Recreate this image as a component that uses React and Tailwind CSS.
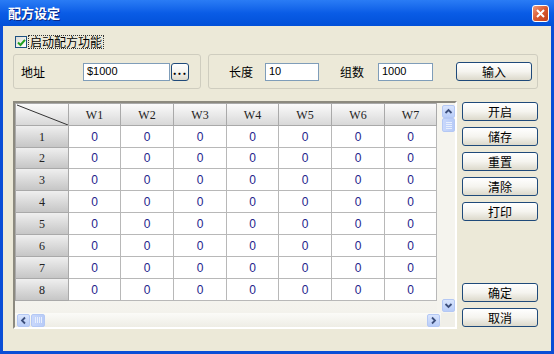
import React from "react";

const cols = [
  { w: "w-[53px]", label: "" },
  { w: "w-[52px]", label: "W1" },
  { w: "w-[53px]", label: "W2" },
  { w: "w-[53px]", label: "W3" },
  { w: "w-[52px]", label: "W4" },
  { w: "w-[53px]", label: "W5" },
  { w: "w-[53px]", label: "W6" },
  { w: "w-[52px]", label: "W7" },
];

const rows = [
  { n: 1, h: "h-[22px]" },
  { n: 2, h: "h-[21px]" },
  { n: 3, h: "h-[22px]" },
  { n: 4, h: "h-[22px]" },
  { n: 5, h: "h-[22px]" },
  { n: 6, h: "h-[22px]" },
  { n: 7, h: "h-[22px]" },
  { n: 8, h: "h-[22px]" },
];

const cjk = "font-['Noto_Sans_CJK_SC','Liberation_Sans',sans-serif]";

function XpButton({ children, className = "" }) {
  return (
    <button
      type="button"
      className={`flex items-center justify-center rounded-[3px] border border-[#1f4a7a] bg-linear-to-b from-white via-[#f5f4ef] to-[#dcd9cb] text-[12px] leading-none text-black ${cjk} ${className}`}
    >
      {children}
    </button>
  );
}

function Chevron({ dir }) {
  const d = {
    up: "M2.5 7 L5.5 4 L8.5 7",
    down: "M2.5 4 L5.5 7 L8.5 4",
    left: "M7 2.5 L4 5.5 L7 8.5",
    right: "M4 2.5 L7 5.5 L4 8.5",
  }[dir];
  return (
    <div className="flex h-[13px] w-[13px] items-center justify-center rounded-[2px] border border-[#b4c8f4] bg-linear-to-b from-[#d9e5fd] to-[#b9cdf8]">
      <svg width="11" height="11" viewBox="0 0 11 11">
        <path d={d} fill="none" stroke="#3c4f7c" strokeWidth="1.8" />
      </svg>
    </div>
  );
}

function Thumb({ vertical }) {
  return (
    <div
      className={`flex items-center justify-center gap-[1px] rounded-[2px] border border-[#b4c8f4] bg-linear-to-r from-[#c9d8fc] to-[#b7cbf7] ${
        vertical ? "h-[14px] w-[13px] flex-col" : "h-[13px] w-[14px]"
      }`}
    >
      {[0, 1, 2, 3].map((i) => (
        <div
          key={i}
          className={vertical ? "h-[1px] w-[6px] bg-[#e8effd]" : "h-[6px] w-[1px] bg-[#e8effd]"}
        />
      ))}
    </div>
  );
}

export default function App() {
  return (
    <div className="flex h-[354px] w-[554px] flex-col bg-[#0a4ed6]">
      {/* title bar */}
      <div className="flex h-[26px] items-center justify-between bg-linear-to-b from-[#2a7cf5] via-[#0a5ce6] to-[#0250d8] pl-[8px] pr-[5px]">
        <span className={`text-[13px] font-bold text-white [text-shadow:1px_1px_0_#0a2a8a] ${cjk}`}>
          配方设定
        </span>
        <div className="flex h-[17px] w-[17px] items-center justify-center rounded-[3px] border border-white bg-linear-to-br from-[#ef9a7a] via-[#d8582f] to-[#c2401a]">
          <svg width="11" height="11" viewBox="0 0 11 11">
            <path d="M2 2 L9 9 M9 2 L2 9" stroke="white" strokeWidth="2" />
          </svg>
        </div>
      </div>

      {/* body */}
      <div className="mx-[3px] mb-[3px] flex flex-1 flex-col bg-[#ece9d8] pl-[10px] pr-[13px] pt-[9px]">
        {/* checkbox */}
        <div className="flex h-[14px] items-center pl-[2px]">
          <div className="flex h-[12px] w-[12px] items-center justify-center border border-[#1c5180] bg-linear-to-br from-[#dcdcd6] to-white">
            <svg width="9" height="9" viewBox="0 0 9 9">
              <path d="M1 4.5 L3.5 7 L8 1.8" fill="none" stroke="#21a121" strokeWidth="2" />
            </svg>
          </div>
          <span
            className={`ml-[1px] border border-dotted border-[#333] px-[1px] text-[12px] leading-[12px] text-black ${cjk}`}
          >
            启动配方功能
          </span>
        </div>

        {/* group boxes */}
        <div className="mt-[5px] flex h-[35px] gap-[7px]">
          <div className="flex w-[188px] items-center rounded-[3px] border border-[#cfcdbf] pl-[7px]">
            <span className={`w-[62px] text-[12px] text-black ${cjk}`}>地址</span>
            <div className="flex h-[18px] w-[87px] items-center border border-[#7f9db9] bg-white pl-[3px] font-['Liberation_Sans',sans-serif] text-[11px] text-black">
              $1000
            </div>
            <XpButton className="ml-[1px] h-[18px] w-[18px] pb-[4px] font-bold tracking-[1px]">...</XpButton>
          </div>
          <div className="flex flex-1 items-center rounded-[3px] border border-[#cfcdbf] pl-[20px]">
            <span className={`w-[36px] text-[12px] text-black ${cjk}`}>长度</span>
            <div className="flex h-[18px] w-[54px] items-center border border-[#7f9db9] bg-white pl-[3px] font-['Liberation_Sans',sans-serif] text-[11px] text-black">
              10
            </div>
            <span className={`ml-[21px] w-[38px] text-[12px] text-black ${cjk}`}>组数</span>
            <div className="flex h-[18px] w-[55px] items-center border border-[#7f9db9] bg-white pl-[3px] font-['Liberation_Sans',sans-serif] text-[11px] text-black">
              1000
            </div>
            <XpButton className="ml-[23px] h-[19px] w-[76px]">输入</XpButton>
          </div>
        </div>

        {/* table + buttons */}
        <div className="mt-[12px] flex h-[228px] gap-[5px]">
          <div className="flex w-[445px] flex-col border-2 border-t-[#8c8a7f] border-l-[#8c8a7f] border-r-white border-b-white">
            <div className="flex h-[210px]">
              <div className="w-[422px] bg-linear-to-b from-white via-white to-[#f3f2ec]">
                <div className="border-l border-t border-[#a9a9a9]">
                  <div className="flex h-[22px]">
                    {cols.map((c, i) => (
                      <div
                        key={i}
                        className={`${c.w} relative flex items-center justify-center border-b border-r border-[#a9a9a9] bg-linear-to-b from-[#fbfbfb] to-[#d8d8d8] font-['Liberation_Serif',serif] text-[12px] text-[#222]`}
                      >
                        {i === 0 ? (
                          <svg className="absolute inset-0" width="52" height="21" viewBox="0 0 52 21">
                            <path d="M1 1 L52 21" stroke="#333" strokeWidth="1" />
                          </svg>
                        ) : (
                          c.label
                        )}
                      </div>
                    ))}
                  </div>
                  {rows.map((r) => (
                    <div key={r.n} className={`flex ${r.h}`}>
                      {cols.map((c, i) =>
                        i === 0 ? (
                          <div
                            key={i}
                            className={`${c.w} flex items-center justify-center border-b border-r border-[#a9a9a9] bg-linear-to-b from-[#efefef] to-[#c6c6c6] font-['Liberation_Serif',serif] text-[12px] text-[#222]`}
                          >
                            {r.n}
                          </div>
                        ) : (
                          <div
                            key={i}
                            className={`${c.w} flex items-center justify-center border-b border-r border-[#b8b8b8] bg-white font-['Liberation_Sans',sans-serif] text-[12px] text-[#24238c]`}
                          >
                            0
                          </div>
                        )
                      )}
                    </div>
                  ))}
                </div>
              </div>
              <div className="flex flex-1 flex-col items-end justify-between bg-[#f5f4ee] pb-[1px] pt-[2px]">
                <div className="flex flex-col">
                  <Chevron dir="up" />
                  <Thumb vertical />
                </div>
                <Chevron dir="down" />
              </div>
            </div>
            <div className="flex h-[14px]">
              <div className="flex w-[426px] items-center justify-between bg-linear-to-b from-[#fbfbf8] to-[#eeede5] pl-[2px] pr-[1px]">
                <div className="flex items-center gap-[1px]">
                  <Chevron dir="left" />
                  <Thumb />
                </div>
                <Chevron dir="right" />
              </div>
              <div className="flex-1 bg-[#f0efe8]" />
            </div>
          </div>

          <div className="flex flex-1 flex-col justify-between pb-[2px] pt-[1px]">
            <div className="flex flex-col gap-[6px]">
              <XpButton className="h-[19px] w-[76px]">开启</XpButton>
              <XpButton className="h-[19px] w-[76px]">储存</XpButton>
              <XpButton className="h-[19px] w-[76px]">重置</XpButton>
              <XpButton className="h-[19px] w-[76px]">清除</XpButton>
              <XpButton className="h-[19px] w-[76px]">打印</XpButton>
            </div>
            <div className="flex flex-col gap-[6px]">
              <XpButton className="h-[19px] w-[76px]">确定</XpButton>
              <XpButton className="h-[19px] w-[76px]">取消</XpButton>
            </div>
          </div>
        </div>
      </div>
    </div>
  );
}
